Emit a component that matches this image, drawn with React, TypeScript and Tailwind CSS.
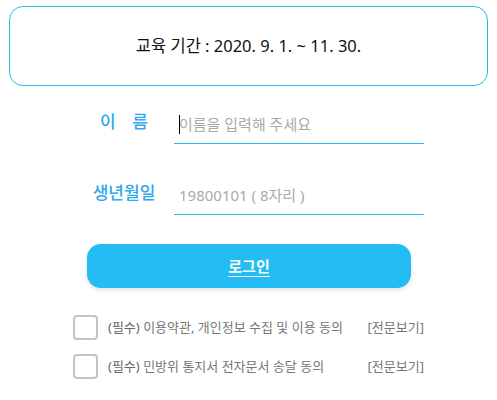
import { useState } from "react";

const font = { fontFamily: '"Noto Sans", "Noto Sans CJK KR", sans-serif' };

function Field({
  label,
  placeholder,
  caret,
}: {
  label: React.ReactNode;
  placeholder: string;
  caret?: boolean;
}) {
  return (
    <div className="flex items-end">
      <div className="flex h-[41px] w-[74px] items-center justify-center pb-[3px] text-[17px] font-medium text-[#2ea8f0]">
        {label}
      </div>
      <div className="relative ml-[13px] w-[250px] border-b border-[#29b6f6]">
        <input
          type="text"
          placeholder={placeholder}
          className="h-[40px] w-full bg-transparent pl-[5px] pt-[2px] text-[15px] text-[#333] outline-none placeholder:text-[#aaa]"
        />
        {caret && <span className="absolute left-[5px] top-[12px] h-[19px] w-px bg-black" />}
      </div>
    </div>
  );
}

function Agree({ text }: { text: string }) {
  const [checked, setChecked] = useState(false);

  return (
    <div className="flex items-center">
      <button
        type="button"
        onClick={() => setChecked(!checked)}
        className="h-[25px] w-[25px] rounded-[4px] border-2 border-[#c4c4c4] bg-white"
        aria-label="동의"
      >
        {checked ? <span className="block h-full w-full rounded-[2px] bg-[#29b6f6]" /> : null}
      </button>
      <span className="ml-[10px] text-[13px] text-[#777]">
        <span className="text-[#666]">(필수)</span> {text}
      </span>
      <span className="ml-auto text-[13px] text-[#777]">[전문보기]</span>
    </div>
  );
}

export default function App() {
  return (
    <div className="w-[497px] bg-white pt-[6px]" style={font}>
      <div className="mx-[9px] flex h-[80px] items-center justify-center rounded-[14px] border border-[#29b6f6] pt-[1px] text-[16.5px] text-[#111]">
        교육 기간 : 2020. 9. 1. ~ 11. 30.
      </div>

      <div className="ml-[87px] mt-[17px] w-[337px]">
        <Field
          label={
            <span className="flex w-[48px] justify-between">
              <span>이</span>
              <span>름</span>
            </span>
          }
          placeholder="이름을 입력해 주세요"
          caret
        />
        <div className="mt-[30px]">
          <Field label="생년월일" placeholder="19800101 ( 8자리 )" />
        </div>

        <button
          type="button"
          className="mt-[29px] h-[44px] w-[324px] rounded-[14px] bg-[#23bdf3] text-[15px] font-bold text-white underline underline-offset-4 shadow-[0_2px_5px_rgba(0,0,0,0.12)]"
        >
          로그인
        </button>
      </div>

      <div className="ml-[73px] mt-[27px] flex w-[351px] flex-col gap-[14px]">
        <Agree text="이용약관, 개인정보 수집 및 이용 동의" />
        <Agree text="민방위 통지서 전자문서 송달 동의" />
      </div>
    </div>
  );
}
